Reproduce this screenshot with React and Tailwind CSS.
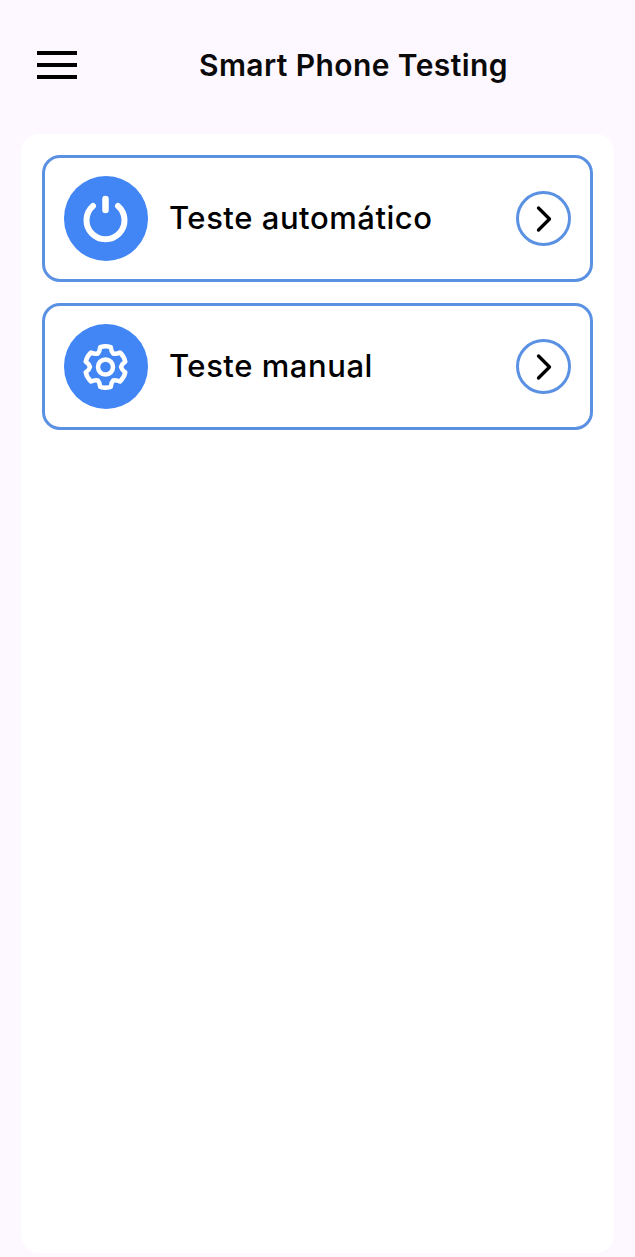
const gearPoints = () => {
  const pts = [];
  for (let i = 0; i < 6; i++) {
    const a = (i * 60 - 90) * (Math.PI / 180);
    const at = (r, off) => {
      const t = a + (off * Math.PI) / 180;
      return `${(23.5 + r * Math.cos(t)).toFixed(2)} ${(24 + r * Math.sin(t)).toFixed(2)}`;
    };
    pts.push(`${at(15.5, -30)}Q${at(16.5, -20)} ${at(20.5, -15)}`, `${at(21.5, 0)} ${at(20.5, 15)}Q${at(16.5, 20)} `);
  }
  // each tooth: valley -> shoulder curve, rounded tip, shoulder -> next valley
  const d = pts.reduce((acc, p, i) => (i % 2 === 0 ? `${acc}${acc ? '' : 'M'}${p}` : `${acc}Q${p}`), '');
  return `${d}${pts[0].split('Q')[0]}Z`;
};

function PowerIcon() {
  return (
    <svg width="48" height="58" viewBox="0 0 48 58" fill="none" stroke="white" strokeLinecap="round">
      <path d="M11 16a19 19 0 1 0 25 0" strokeWidth="6" />
      <path d="M23.5 9v11" strokeWidth="6.5" />
    </svg>
  );
}

function GearIcon() {
  return (
    <svg width="48" height="48" viewBox="0 0 48 48" fill="none" stroke="white" strokeWidth="4.5" strokeLinejoin="round">
      <path d={gearPoints()} />
      <circle cx="23.5" cy="24" r="7.5" />
    </svg>
  );
}

function TestRow({ label, icon }) {
  return (
    <div className="flex h-[127px] items-center rounded-[18px] border-[3px] border-[#5b91e3] pl-[19px] pr-[19px]">
      <div className="flex h-[85px] w-[84px] shrink-0 items-center justify-center rounded-full bg-[#4286f5]">{icon}</div>
      <span className="ml-[21px] mb-[2px] flex-1 text-[31px] font-medium leading-none tracking-[0.55px] text-black">{label}</span>
      <div className="flex h-[55px] w-[55px] items-center justify-center rounded-full border-[3px] border-[#5b91e3]">
        <svg width="20" height="28" viewBox="0 0 20 28" fill="none" stroke="black" strokeWidth="3.3" strokeLinecap="round" strokeLinejoin="round">
          <path d="M4.5 3 15.5 14 4.5 25" />
        </svg>
      </div>
    </div>
  );
}

export default function App() {
  return (
    <div className="flex h-[1257px] w-[635px] flex-col overflow-hidden bg-[#fdf7ff] font-['Inter',sans-serif]">
      <header className="flex h-[134px] shrink-0 items-center pb-[4px] pl-[37px]">
        <div className="flex w-[40px] flex-col gap-[8px]">
          <span className="h-[4px] bg-black" />
          <span className="h-[4px] bg-black" />
          <span className="h-[4px] bg-black" />
        </div>
        <h1 className="ml-[122px] text-[30px] font-semibold leading-none tracking-[0.4px] text-[#0a0a0a]">Smart Phone Testing</h1>
      </header>
      <main className="mx-[21px] mb-[4px] flex flex-1 flex-col gap-[21px] rounded-[18px] bg-white px-[21px] py-[21px]">
        <TestRow label="Teste automático" icon={<PowerIcon />} />
        <TestRow label="Teste manual" icon={<GearIcon />} />
      </main>
    </div>
  );
}
